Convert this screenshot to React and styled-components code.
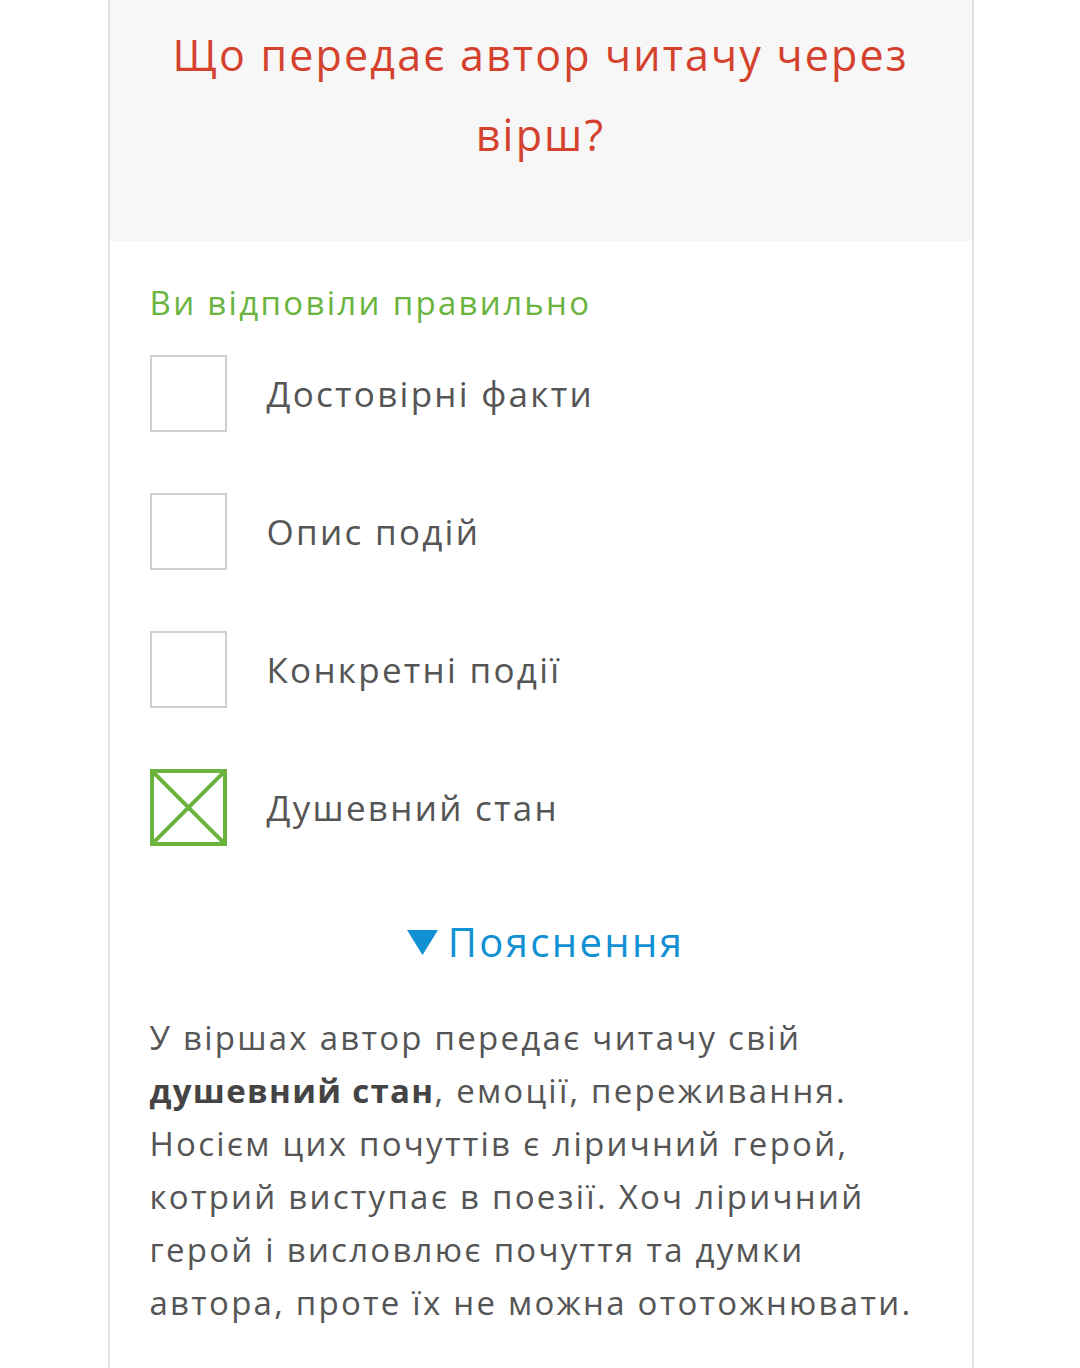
import React from 'react'
import styled, { createGlobalStyle } from 'styled-components'

const Global = createGlobalStyle`
  html, body {
    margin: 0;
    padding: 0;
    background: #ffffff;
  }
  body {
    font-family: "Open Sans", "Noto Sans", sans-serif;
  }
`

const Page = styled.div`
  width: 1080px;
  min-height: 1368px;
  display: flex;
  justify-content: center;
  padding-left: 1px;
  box-sizing: border-box;
`

const Card = styled.div`
  width: 866px;
  min-height: 1368px;
  border-left: 2px solid #e3e3e3;
  border-right: 2px solid #e3e3e3;
  box-sizing: border-box;
  background: #fff;
`

const Header = styled.div`
  background: #f7f7f7;
  height: 241px;
  padding: 15px 30px 0;
  box-sizing: border-box;
`

const Title = styled.h1`
  margin: 0;
  text-align: center;
  color: #d4412d;
  font-weight: 400;
  font-size: 43px;
  line-height: 80px;
  letter-spacing: 0.05em;
`

const Body = styled.div`
  padding: 40px 30px 0 40px;
`

const Status = styled.div`
  color: #6ab43e;
  font-size: 33px;
  line-height: 44px;
  letter-spacing: 0.07em;
  margin-bottom: 30px;
`

const Options = styled.div`
  display: flex;
  flex-direction: column;
  gap: 61px;
`

const Option = styled.div`
  display: flex;
  align-items: center;
  gap: 40px;
`

const Box = styled.div`
  width: 77px;
  height: 77px;
  box-sizing: border-box;
  border: ${p => (p.$checked ? '4px solid #6ab43e' : '2px solid #cfcfcf')};
  flex-shrink: 0;
  display: flex;
`

const Label = styled.span`
  color: #555555;
  font-size: 35px;
  line-height: 44px;
  letter-spacing: 0.065em;
`

const Toggle = styled.div`
  display: flex;
  justify-content: center;
  align-items: center;
  gap: 10px;
  margin-top: 72px;
  color: #1190d4;
  font-size: 40px;
  line-height: 48px;
  letter-spacing: 0.06em;
`

const Explain = styled.p`
  margin: 45px 0 0;
  color: #555555;
  font-size: 33px;
  line-height: 53px;
  letter-spacing: 0.068em;
  white-space: nowrap;

  b {
    font-weight: 700;
    color: #444;
    letter-spacing: 0.04em;
  }
`

const Cross = () => (
  <svg width="69" height="69" viewBox="0 0 69 69">
    <path d="M0 0 L69 69 M69 0 L0 69" stroke="#6ab43e" strokeWidth="4" />
  </svg>
)

const options = [
  { text: 'Достовірні факти' },
  { text: 'Опис подій' },
  { text: 'Конкретні події' },
  { text: 'Душевний стан', checked: true },
]

export default function App() {
  return (
    <Page>
      <Global />
      <Card>
        <Header>
          <Title>Що передає автор читачу через вірш?</Title>
        </Header>
        <Body>
          <Status>Ви відповіли правильно</Status>
          <Options>
            {options.map(o => (
              <Option key={o.text}>
                <Box $checked={o.checked}>{o.checked && <Cross />}</Box>
                <Label>{o.text}</Label>
              </Option>
            ))}
          </Options>
          <Toggle>
            <svg width="31" height="25" viewBox="0 0 31 25">
              <path d="M0 0 H31 L15.5 25 Z" fill="#1190d4" />
            </svg>
            Пояснення
          </Toggle>
          <Explain>
            У віршах автор передає читачу свій<br />
            <b>душевний стан</b>, емоції, переживання.<br />
            Носієм цих почуттів є ліричний герой,<br />
            котрий виступає в поезії. Хоч ліричний<br />
            герой і висловлює почуття та думки<br />
            автора, проте їх не можна ототожнювати.
          </Explain>
        </Body>
      </Card>
    </Page>
  )
}
